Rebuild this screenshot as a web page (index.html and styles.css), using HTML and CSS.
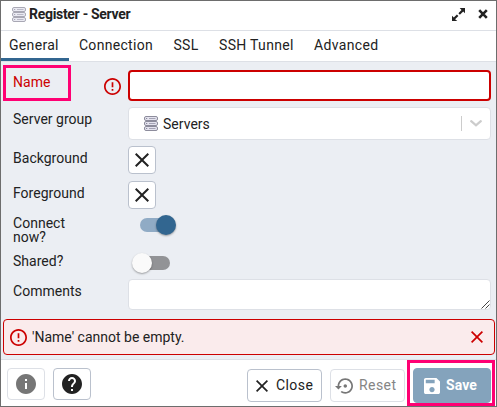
FILE: index.html
```html
<!DOCTYPE html>
<html lang="en">
<head>
<meta charset="utf-8">
<title>Register - Server</title>
<link rel="stylesheet" href="styles.css">
</head>
<body>
<svg width="0" height="0" class="defs">
  <symbol id="server" viewBox="0 0 14 15">
    <g fill="#e4e3ee" stroke="#8d8c9c">
      <rect x=".5" y=".5" width="13" height="4" rx="1.5"/>
      <rect x=".5" y="5.5" width="13" height="4" rx="1.5"/>
      <rect x=".5" y="10.5" width="13" height="4" rx="1.5"/>
    </g>
    <path d="M5 2.5h6.5M5 7.5h6.5M5 12.5h6.5" stroke="#a5a4b6"/>
    <path d="M2.2 2.5h1M2.2 7.5h1M2.2 12.5h1" stroke="#77768c"/>
  </symbol>
  <symbol id="error" viewBox="2 2 20 20">
    <path fill="currentColor" d="M11 15h2v2h-2zm0-8h2v6h-2zm.99-5C6.47 2 2 6.48 2 12s4.47 10 9.99 10C17.52 22 22 17.52 22 12S17.52 2 11.99 2zM12 20c-4.42 0-8-3.58-8-8s3.58-8 8-8 8 3.58 8 8-3.58 8-8 8z"/>
  </symbol>
  <symbol id="close" viewBox="5 5 14 14">
    <path fill="currentColor" d="M19 6.41 17.59 5 12 10.59 6.41 5 5 6.41 10.59 12 5 17.59 6.41 19 12 13.41 17.59 19 19 17.59 13.41 12z"/>
  </symbol>
</svg>
<main class="dialog">
  <header class="titlebar">
    <svg class="title-icon" width="14" height="15"><use href="#server"/></svg>
    <h1>Register - Server</h1>
    <svg class="expand" width="13" height="13" viewBox="0 0 13 13"><path d="M7.7 0H13v5.3l-1.8-1.8-3.3 3.2-1.5-1.5 3.1-3.3zM5.3 13H0V7.7l1.8 1.8 3.1-3.1 1.5 1.5-3.3 3.3z" fill="#222"/></svg>
    <svg class="shut" width="10" height="10" viewBox="0 0 10 10"><path d="M1.2 1.2l7.6 7.6M8.8 1.2L1.2 8.8" stroke="#222" stroke-width="2.6"/></svg>
  </header>
  <nav class="tabs">
    <span class="tab active">General</span><span class="tab">Connection</span><span class="tab">SSL</span><span class="tab">SSH Tunnel</span><span class="tab">Advanced</span>
  </nav>
  <section class="form">
    <div class="row name-row">
      <label class="invalid">Name</label>
      <svg class="field-error" width="17" height="17"><use href="#error"/></svg>
      <div class="field input"></div>
      <div class="mark mark-name"></div>
    </div>
    <div class="row">
      <label>Server group</label>
      <div class="field select">
        <svg width="14" height="15"><use href="#server"/></svg>
        <span>Servers</span>
        <i class="divider"></i>
        <svg class="chevron" width="12" height="7" viewBox="0 0 12 7"><path d="M1.2 1.2 6 5.4l4.8-4.2" fill="none" stroke="#ccc" stroke-width="2.2" stroke-linecap="round"/></svg>
      </div>
    </div>
    <div class="row">
      <label>Background</label>
      <div class="color"><svg width="14" height="14"><use href="#close"/></svg></div>
    </div>
    <div class="row fg">
      <label>Foreground</label>
      <div class="color"><svg width="14" height="14"><use href="#close"/></svg></div>
    </div>
    <div class="row connect">
      <label>Connect now?</label>
      <div class="switch on"></div>
    </div>
    <div class="row shared">
      <label>Shared?</label>
      <div class="switch"></div>
    </div>
    <div class="row">
      <label>Comments</label>
      <div class="field comments"><svg width="9" height="9" viewBox="0 0 9 9"><path d="M.5 8.5l8-8M4.5 8.5l4-4" stroke="#444"/></svg></div>
    </div>
    <div class="alert">
      <svg width="17" height="17"><use href="#error"/></svg>
      <span>'Name' cannot be empty.</span>
      <svg class="dismiss" width="12" height="12"><use href="#close"/></svg>
    </div>
  </section>
  <footer class="footer">
    <div class="btn square muted">
      <svg width="20" height="20" viewBox="2 2 20 20"><path fill="#767676" d="M12 2C6.48 2 2 6.48 2 12s4.48 10 10 10 10-4.48 10-10S17.52 2 12 2zm1 15h-2v-6h2v6zm0-8h-2V7h2v2z"/></svg>
    </div>
    <div class="btn square help">
      <svg width="20" height="20" viewBox="2 2 20 20"><path fill="#222" d="M12 2C6.48 2 2 6.48 2 12s4.48 10 10 10 10-4.48 10-10S17.52 2 12 2zm1 17h-2v-2h2v2zm2.07-7.75-.9.92C13.45 12.9 13 13.5 13 15h-2v-.5c0-1.1.45-2.1 1.17-2.83l1.24-1.26c.37-.36.59-.86.59-1.41 0-1.1-.9-2-2-2s-2 .9-2 2H8c0-2.21 1.79-4 4-4s4 1.79 4 4c0 .88-.36 1.68-.93 2.25z"/></svg>
    </div>
    <div class="btn close"><svg width="12" height="12"><use href="#close"/></svg><span>Close</span></div>
    <div class="btn reset muted"><svg width="18" height="16" viewBox="0 3 21 18"><path fill="#777" d="M14 12c0-1.1-.9-2-2-2s-2 .9-2 2 .9 2 2 2 2-.9 2-2zm-2-9c-4.97 0-9 4.03-9 9H0l4 4 4-4H5c0-3.87 3.13-7 7-7s7 3.13 7 7-3.13 7-7 7c-1.51 0-2.91-.49-4.06-1.3l-1.42 1.44C8.04 20.3 9.94 21 12 21c4.97 0 9-4.03 9-9s-4.03-9-9-9z"/></svg><span>Reset</span></div>
    <div class="btn save"><svg width="16" height="16" viewBox="3 3 18 18"><path fill="#fff" d="M17 3H5c-1.11 0-2 .9-2 2v14c0 1.1.89 2 2 2h14c1.1 0 2-.9 2-2V7l-4-4zm-5 16c-1.66 0-3-1.34-3-3s1.34-3 3-3 3 1.34 3 3-1.34 3-3 3zm3-10H5V5h10v4z"/></svg><span>Save</span><div class="mark mark-save"></div></div>
  </footer>
</main>
</body>
</html>
```
FILE: styles.css
```css
* { box-sizing: border-box; }
body { margin: 0; font: 14px/14px Roboto, sans-serif; color: #222; letter-spacing: .02px; }
svg { display: block; flex: none; }
.defs { position: absolute; }
.dialog { width: 497px; height: 407px; border: 1px solid #6d6d6d; display: flex; flex-direction: column; background: #fff; overflow: hidden; }
.titlebar { height: 30px; border-bottom: 1px solid #dde0e6; display: flex; align-items: center; padding: 0 8px 3px 11px; }
.title-icon { margin: 1px 3px 0 0; opacity: .75; }
h1 { margin: 0; font-size: 14px; line-height: 14px; font-weight: 700; letter-spacing: -.3px; }
.expand { margin-left: auto; }
.shut { margin-left: 13px; }
.tabs { height: 31px; border-bottom: 1px solid #dde0e6; display: flex; }
.tab { height: 30px; padding: 7px 10.2px 0; letter-spacing: .32px; white-space: nowrap; }
.tab.active { width: 68px; margin-right: -.3px; padding: 7px 0 0 8px; border-bottom: 3px solid #326690; }
.form { height: 297px; background: #ebeef3; padding: 8px 5px 0 12px; }
.row { display: flex; position: relative; margin-bottom: 6px; }
label { width: 75px; margin: 5px 40px 0 0; white-space: nowrap; flex: none; }
.invalid { color: #c00; }
.name-row label { margin-right: 16px; }
.field-error { margin: 8px 7px 0 0; color: #c00; }
.field { flex: 1; background: #fff; border: 1px solid #dde0e6; border-radius: 4px; }
.input { height: 31px; border: 2px solid #c00; }
.select { height: 33px; display: flex; align-items: center; padding: 0 8px 0 15px; }
.select span { margin-left: 5px; }
.divider { width: 1px; height: 15px; background: #ccc; margin: 0 8px 0 auto; }
.color { width: 28px; height: 28px; border: 1px solid #bac1cd; border-radius: 4px; background: #fff; display: grid; place-items: center; }
.row.fg { margin-top: 7px; }
.connect label { margin-top: 1px; white-space: normal; }
.connect { height: 28px; margin-bottom: 10px; }
.shared { height: 20px; }
.shared label { margin-top: 1px; }
.switch { width: 34px; height: 14px; border-radius: 7px; background: #929396; margin: 3px 0 0 8px; position: relative; }
.switch::before { content: ""; position: absolute; width: 20px; height: 20px; border-radius: 50%; left: -4px; top: -3px; background: #fafafa; box-shadow: 0 1px 2px rgba(0,0,0,.35); }
.switch.on { background: #90abc5; margin-left: 12px; }
.switch.on::before { left: 16px; background: #326690; }
.comments { height: 31px; display: flex; justify-content: flex-end; align-items: flex-end; }
.alert { height: 36px; margin: 9px -4px 0 -10px; background: #faebec; border: 1px solid #c00; border-radius: 4px; display: flex; align-items: center; padding: 0 11px 0 6px; }
.alert svg { color: #c00; }
.alert span { margin-left: 5px; letter-spacing: 0; }
.alert .dismiss { margin-left: auto; }
.footer { height: 47px; border-top: 1px solid #dde0e6; display: flex; align-items: flex-start; padding: 8px 5px 0 6px; }
.btn { height: 33px; border: 1px solid #bac1cd; border-radius: 4px; display: flex; align-items: center; position: relative; letter-spacing: .42px; }
.btn span { position: relative; top: -1px; }
.btn.square { width: 38px; height: 32px; justify-content: center; }
.btn.muted { border-color: #dde0e6; color: #858585; }
.help { margin-left: 8px; }
.close { width: 75px; margin: 1px 0 0 156px; padding-left: 8px; gap: 8px; }
.reset { width: 75px; margin: 1px 0 0 8px; padding-left: 4px; gap: 6px; }
.save { width: 78px; height: 35px; margin-left: 8px; padding-left: 10px; gap: 6px; color: #fff; font-weight: 700; background: #84a3bc; border-color: #84a3bc; letter-spacing: .1px; }
.mark { position: absolute; border: 3px solid #ff0073; }
.mark-name { left: -10px; top: -5px; width: 68px; height: 36px; }
.mark-save { left: -7px; top: -9px; width: 88px; height: 46px; }
```
